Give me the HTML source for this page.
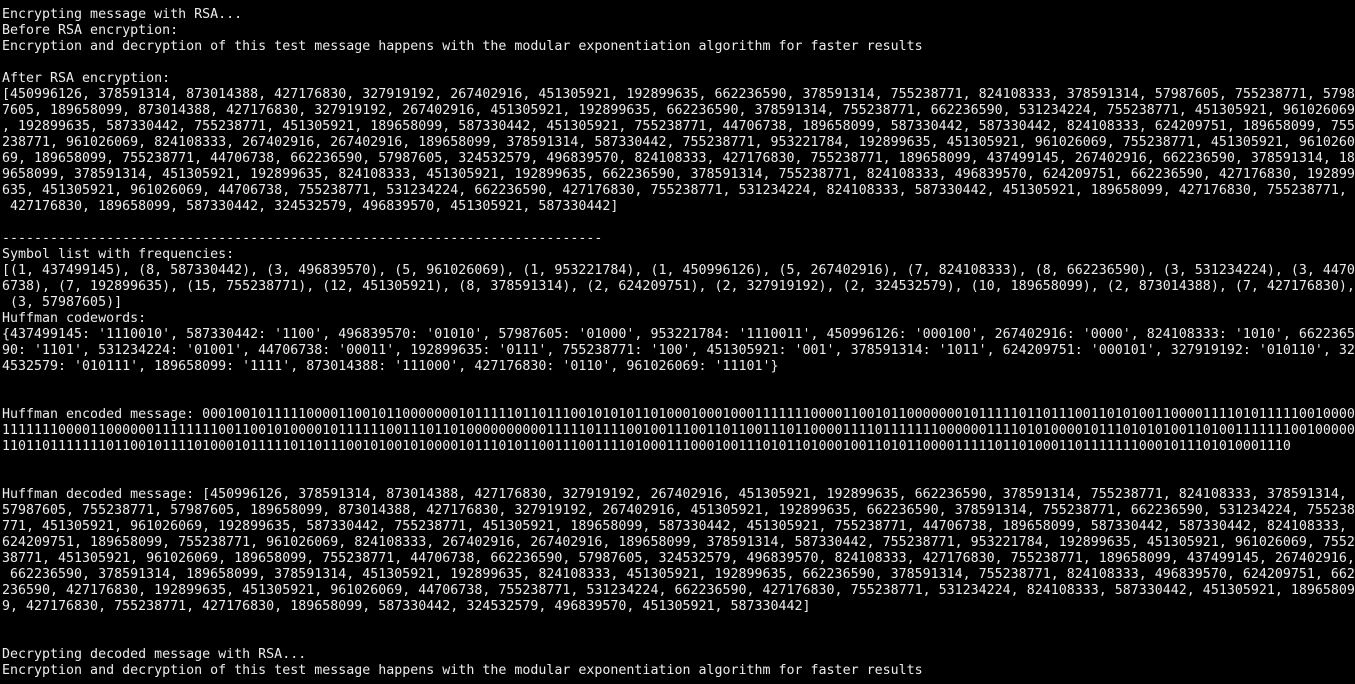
<!DOCTYPE html>
<html><head><meta charset="utf-8"><style>
html,body{margin:0;padding:0;background:#000;width:1355px;height:684px;overflow:hidden}
pre{margin:0;padding:7px 0 0 2px;font-family:"DejaVu Sans Mono","Liberation Mono",monospace;font-size:13.3px;line-height:16px;color:#ececec;white-space:pre}
</style></head><body><pre>Encrypting message with RSA...
Before RSA encryption:
Encryption and decryption of this test message happens with the modular exponentiation algorithm for faster results

After RSA encryption:
[450996126, 378591314, 873014388, 427176830, 327919192, 267402916, 451305921, 192899635, 662236590, 378591314, 755238771, 824108333, 378591314, 57987605, 755238771, 5798
7605, 189658099, 873014388, 427176830, 327919192, 267402916, 451305921, 192899635, 662236590, 378591314, 755238771, 662236590, 531234224, 755238771, 451305921, 961026069
, 192899635, 587330442, 755238771, 451305921, 189658099, 587330442, 451305921, 755238771, 44706738, 189658099, 587330442, 587330442, 824108333, 624209751, 189658099, 755
238771, 961026069, 824108333, 267402916, 267402916, 189658099, 378591314, 587330442, 755238771, 953221784, 192899635, 451305921, 961026069, 755238771, 451305921, 9610260
69, 189658099, 755238771, 44706738, 662236590, 57987605, 324532579, 496839570, 824108333, 427176830, 755238771, 189658099, 437499145, 267402916, 662236590, 378591314, 18
9658099, 378591314, 451305921, 192899635, 824108333, 451305921, 192899635, 662236590, 378591314, 755238771, 824108333, 496839570, 624209751, 662236590, 427176830, 192899
635, 451305921, 961026069, 44706738, 755238771, 531234224, 662236590, 427176830, 755238771, 531234224, 824108333, 587330442, 451305921, 189658099, 427176830, 755238771,
 427176830, 189658099, 587330442, 324532579, 496839570, 451305921, 587330442]

---------------------------------------------------------------------------
Symbol list with frequencies:
[(1, 437499145), (8, 587330442), (3, 496839570), (5, 961026069), (1, 953221784), (1, 450996126), (5, 267402916), (7, 824108333), (8, 662236590), (3, 531234224), (3, 4470
6738), (7, 192899635), (15, 755238771), (12, 451305921), (8, 378591314), (2, 624209751), (2, 327919192), (2, 324532579), (10, 189658099), (2, 873014388), (7, 427176830),
 (3, 57987605)]
Huffman codewords:
{437499145: '1110010', 587330442: '1100', 496839570: '01010', 57987605: '01000', 953221784: '1110011', 450996126: '000100', 267402916: '0000', 824108333: '1010', 6622365
90: '1101', 531234224: '01001', 44706738: '00011', 192899635: '0111', 755238771: '100', 451305921: '001', 378591314: '1011', 624209751: '000101', 327919192: '010110', 32
4532579: '010111', 189658099: '1111', 873014388: '111000', 427176830: '0110', 961026069: '11101'}


Huffman encoded message: 000100101111100001100101100000001011111011011100101010110100010001000111111100001100101100000001011111011011100110101001100001111010111110010000
1111111000011000000111111110011001010000101111110011101101000000000011111011110010011100110110011101100001111011111110000001111010100001011101010100110100111111100100000
11011011111110110010111101000101111101101110010100101000010111010110011100111101000111000100111010110100010011010110000111110110100011011111110001011101010001110


Huffman decoded message: [450996126, 378591314, 873014388, 427176830, 327919192, 267402916, 451305921, 192899635, 662236590, 378591314, 755238771, 824108333, 378591314, 
57987605, 755238771, 57987605, 189658099, 873014388, 427176830, 327919192, 267402916, 451305921, 192899635, 662236590, 378591314, 755238771, 662236590, 531234224, 755238
771, 451305921, 961026069, 192899635, 587330442, 755238771, 451305921, 189658099, 587330442, 451305921, 755238771, 44706738, 189658099, 587330442, 587330442, 824108333, 
624209751, 189658099, 755238771, 961026069, 824108333, 267402916, 267402916, 189658099, 378591314, 587330442, 755238771, 953221784, 192899635, 451305921, 961026069, 7552
38771, 451305921, 961026069, 189658099, 755238771, 44706738, 662236590, 57987605, 324532579, 496839570, 824108333, 427176830, 755238771, 189658099, 437499145, 267402916,
 662236590, 378591314, 189658099, 378591314, 451305921, 192899635, 824108333, 451305921, 192899635, 662236590, 378591314, 755238771, 824108333, 496839570, 624209751, 662
236590, 427176830, 192899635, 451305921, 961026069, 44706738, 755238771, 531234224, 662236590, 427176830, 755238771, 531234224, 824108333, 587330442, 451305921, 18965809
9, 427176830, 755238771, 427176830, 189658099, 587330442, 324532579, 496839570, 451305921, 587330442]


Decrypting decoded message with RSA...
Encryption and decryption of this test message happens with the modular exponentiation algorithm for faster results</pre></body></html>
